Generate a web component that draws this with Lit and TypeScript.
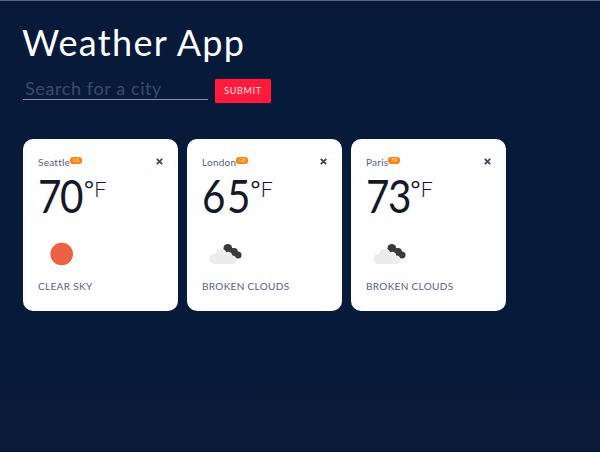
import { LitElement, html, css, svg } from "lit";
import { customElement, property } from "lit/decorators.js";

// Advance of each digit in the large temperature figure, in pixels.
const DIGIT_ADVANCE: Record<string, number> = { "0": 24, "3": 22.5, "5": 24, "6": 24.5, "7": 22 };

@customElement("weather-card")
class WeatherCard extends LitElement {
  @property() city = "";
  @property() country = "";
  @property() temp = "";
  @property() sky = "";

  static styles = css`
    :host { display: block; box-sizing: border-box; width: 155px; height: 172px; padding: 16px 15px 0; border-radius: 10px; background: #fefdff; }
    .head { display: flex; height: 15px; color: #55617c; font-size: 10px; line-height: 14px; }
    .city { letter-spacing: 0.25px; }
    .badge { margin-top: 2px; height: 7px; width: 12px; border-radius: 3px; background: #fa8410; color: #ffdcb4; font-size: 5px; line-height: 7px; text-align: center; }
    .close { margin: 3px 0 0 auto; width: 7px; height: 7px; }
    .close svg, .icon svg { display: block; }
    .temp { display: flex; height: 50px; margin-top: 1px; color: #151826; font-size: 46px; line-height: 50px; }
    .digit { display: block; transform: scaleX(0.88); transform-origin: left; }
    .degree { width: 10px; font-size: 24px; line-height: 36px; }
    .unit { font-size: 22px; font-weight: 300; line-height: 36px; }
    .icon { margin-top: 15px; height: 45px; }
    .sky { font-size: 10px; line-height: 12px; margin-top: -1px; color: #56627d; letter-spacing: 0.33px; white-space: nowrap; }
  `;

  render() {
    const clear = this.sky === "CLEAR SKY";
    return html`
      <div class="head">
        <span class="city">${this.city}</span><span class="badge">${this.country}</span>
        <span class="close"><svg width="7" height="7" viewBox="0 0 7 7"><path d="M.8 .8 6.200 6.200M6.200 .8 .8 6.200" stroke="#3a4a69" stroke-width="1.9" /></svg></span>
      </div>
      <div class="temp">${[...this.temp].map((d) => html`<span class="digit" style="width:${DIGIT_ADVANCE[d]}px">${d}</span>`)}<span class="degree">°</span><span class="unit">F</span></div>
      <div class="icon">
        <svg width="46" height="45" viewBox="0 0 46 45">
          ${clear
            ? svg`<circle cx="23.7" cy="18" r="11.3" fill="#ec6142" />`
            : svg`<g fill="#3b3b3d"><circle cx="25.8" cy="12.400" r="4.400" /><circle cx="32" cy="16" r="3.900" /><circle cx="36" cy="19" r="3.500" /><path d="M22 15 28 10 38 20 33 22Z" /></g>
              <path fill="#ececed" d="M12.5 28a5 5 0 0 1-.4-10c.9 0 1.200.1 1.200.1a5.700 5.700 0 0 1 11-1.800a4 4 0 0 1 6 3.200a4.300 4.300 0 0 1 .7 8.500Z" />`}
        </svg>
      </div>
      <div class="sky">${this.sky}</div>
    `;
  }
}

@customElement("app-root")
class AppRoot extends LitElement {
  static styles = css`
    :host { display: block; box-sizing: border-box; width: 600px; height: 452px; padding: 18px 22px 0 23px; border-top: 1px solid #58657f; border-bottom: 1px solid #06122b; background: linear-gradient(#071a3a 0 375px, #0a1a38 400px); font-family: Lato, "Open Sans", sans-serif; }
    h1 { margin: 0 0 0 -1px; height: 48px; font-size: 36px; line-height: 46px; font-weight: 400; color: #fff; letter-spacing: 1.3px; white-space: nowrap; }
    form { display: flex; gap: 7px; margin-top: 11px; }
    .field { box-sizing: border-box; width: 185px; height: 22px; padding-left: 2px; border-bottom: 1px solid #8892a6; color: #3c4a69; font-size: 18px; line-height: 21px; letter-spacing: 0.6px; white-space: nowrap; }
    .submit { width: 56px; height: 24px; border: 0; padding: 0; border-radius: 2px; background: #ff1b3b; color: #ffe3e8; font: 9px/24px Lato, sans-serif; letter-spacing: 0.65px; box-shadow: 0 0 1px #ff1b3b; margin-top: 1px; }
    .cards { display: flex; gap: 9px; margin-top: 36px; }
  `;

  render() {
    const cities = [
      ["Seattle", "US", "70", "CLEAR SKY"],
      ["London", "GB", "65", "BROKEN CLOUDS"],
      ["Paris", "FR", "73", "BROKEN CLOUDS"],
    ];
    return html`
      <h1>Weather App</h1>
      <form>
        <div class="field">Search for a city</div>
        <button class="submit" type="button">SUBMIT</button>
      </form>
      <div class="cards">
        ${cities.map(([city, country, temp, sky]) => html`<weather-card .city=${city} .country=${country} .temp=${temp} .sky=${sky}></weather-card>`)}
      </div>
    `;
  }
}
